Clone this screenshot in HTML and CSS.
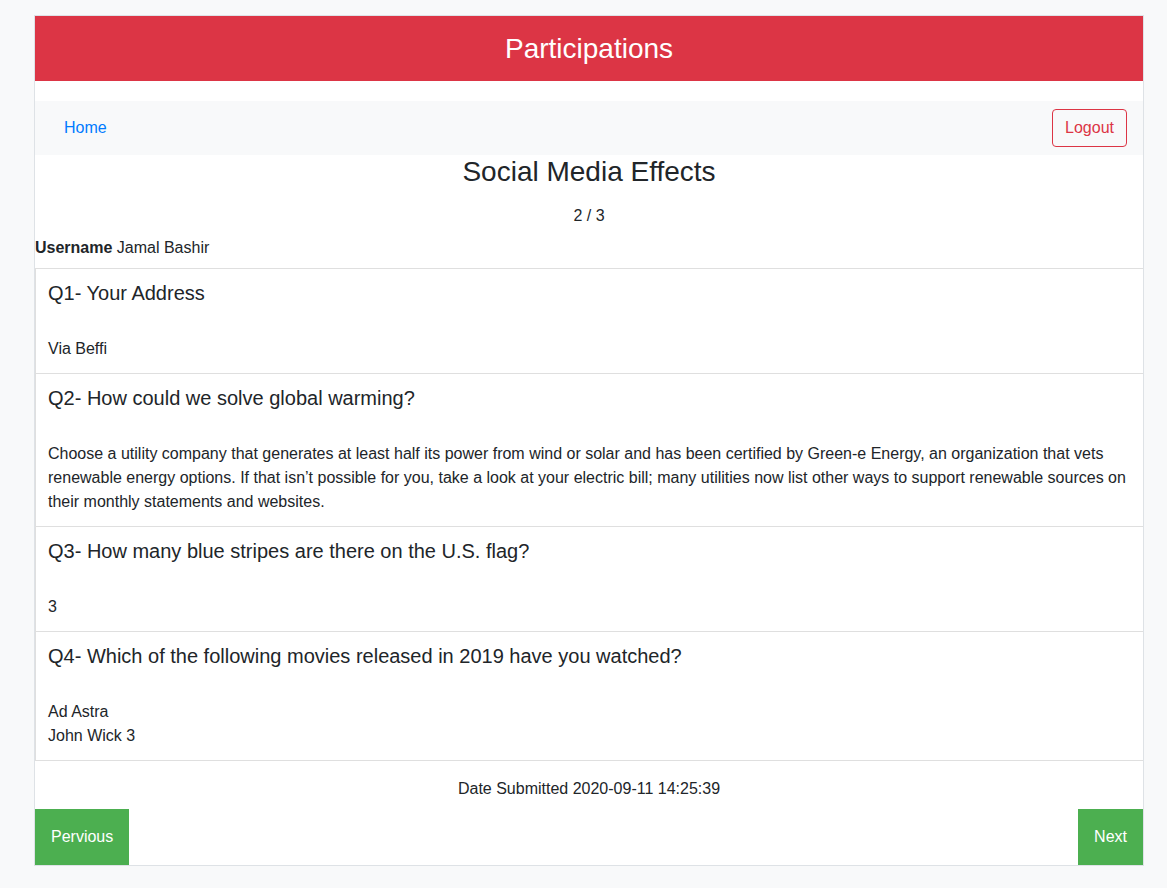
FILE: index.html
```html
<!DOCTYPE html>
<html lang="en">
<head>
<meta charset="utf-8">
<title>Participations</title>
<link rel="stylesheet" href="styles.css">
</head>
<body>
<div class="page">
  <div class="container">
    <header class="banner">Participations</header>
    <nav class="navbar">
      <a class="nav-link" href="#">Home</a>
      <button class="btn-logout" type="button">Logout</button>
    </nav>
    <h3 class="survey-title">Social Media Effects</h3>
    <p class="pager">2 / 3</p>
    <p class="username"><strong>Username</strong> Jamal Bashir</p>
    <ul class="list-group">
      <li class="list-item">
        <h5 class="question">Q1- Your Address</h5>
        <div class="answer">Via Beffi</div>
      </li>
      <li class="list-item">
        <h5 class="question">Q2- How could we solve global warming?</h5>
        <div class="answer">Choose a utility company that generates at least half its power from wind or solar and has been certified by Green-e Energy, an organization that vets renewable energy options. If that isn’t possible for you, take a look at your electric bill; many utilities now list other ways to support renewable sources on their monthly statements and websites.</div>
      </li>
      <li class="list-item">
        <h5 class="question">Q3- How many blue stripes are there on the U.S. flag?</h5>
        <div class="answer">3</div>
      </li>
      <li class="list-item">
        <h5 class="question">Q4- Which of the following movies released in 2019 have you watched?</h5>
        <div class="answer">Ad Astra<br>John Wick 3</div>
      </li>
    </ul>
    <p class="submitted">Date Submitted 2020-09-11 14:25:39</p>
    <div class="pager-buttons">
      <button class="btn-green" type="button">Pervious</button>
      <button class="btn-green" type="button">Next</button>
    </div>
  </div>
</div>
</body>
</html>
```
FILE: styles.css
```css
* { box-sizing: border-box; }

body {
  margin: 0;
  background: #f8f9fa;
  font-family: "Liberation Sans", Arial, sans-serif;
  font-size: 16px;
  line-height: 24px;
  color: #212529;
}

.page {
  padding-top: 15px;
  padding-bottom: 22px;
}

.container {
  margin-left: 34px;
  width: 1110px;
  background: #fff;
  border: 1px solid #dee2e6;
}

.banner {
  background: #dc3545;
  color: #fff;
  text-align: center;
  font-size: 28px;
  line-height: 33px;
  padding: 16px 0;
}

.navbar {
  margin-top: 20px;
  background: #f8f9fa;
  display: flex;
  align-items: center;
  justify-content: space-between;
  padding: 8px 16px 8px 29px;
}

.nav-link {
  color: #007bff;
  text-decoration: none;
}

.btn-logout {
  font-family: inherit;
  font-size: 16px;
  line-height: 24px;
  color: #dc3545;
  background: transparent;
  border: 1px solid #dc3545;
  border-radius: 4px;
  padding: 6px 12px;
}

.survey-title {
  margin: 0;
  text-align: center;
  font-size: 28px;
  font-weight: 400;
  line-height: 34px;
}

.pager {
  margin: 15px 0 0;
  text-align: center;
}

.username {
  margin: 8px 0 0;
}

.list-group {
  list-style: none;
  margin: 8px 0 0;
  padding: 0;
}

.list-item {
  border-left: 1px solid rgba(0, 0, 0, 0.125);
  border-bottom: 1px solid rgba(0, 0, 0, 0.125);
  padding: 12px 12px 12px;
}

.list-item:first-child {
  border-top: 1px solid rgba(0, 0, 0, 0.125);
}

.question {
  margin: 0 0 32px;
  font-size: 20px;
  font-weight: 400;
  line-height: 24px;
}

.answer {
  font-size: 16px;
  line-height: 24px;
}

.submitted {
  margin: 16px 0 0;
  text-align: center;
}

.pager-buttons {
  margin-top: 8px;
  display: flex;
  justify-content: space-between;
}

.btn-green {
  font-family: inherit;
  font-size: 16px;
  line-height: 24px;
  color: #fff;
  background: #4caf50;
  border: none;
  padding: 16px;
}
```
